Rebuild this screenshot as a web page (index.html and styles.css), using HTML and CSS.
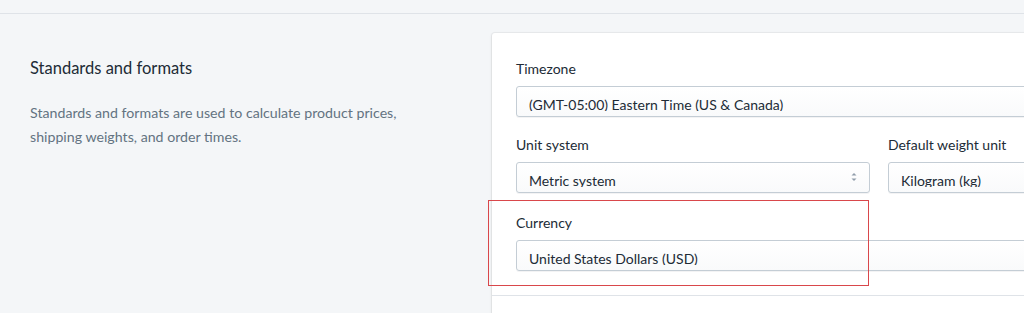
FILE: index.html
```html
<!DOCTYPE html>
<html lang="en">
<head>
    <meta charset="UTF-8">
    <meta name="viewport" content="width=device-width, initial-scale=1.0">
    <title>General settings</title>
    <link rel="stylesheet" href="styles.css">
</head>
<body>
    <div class="topbar"></div>

    <div class="layout">
        <div class="annotation">
            <h2 class="annotation-title">Standards and formats</h2>
            <p class="annotation-text">Standards and formats are used to calculate product prices, shipping weights, and order times.</p>
        </div>

        <div class="card">
            <div class="card-section">
                <div class="field">
                    <label class="field-label">Timezone</label>
                    <div class="select">
                        <span class="select-value">(GMT-05:00) Eastern Time (US &amp; Canada)</span>
                    </div>
                </div>

                <div class="field-row">
                    <div class="field field-unit">
                        <label class="field-label">Unit system</label>
                        <div class="select">
                            <span class="select-value">Metric system</span>
                            <svg class="select-arrows" width="8" height="10" viewBox="0 0 8 10">
                                <path d="M4 1 L6.5 3.5 H1.5 Z" fill="#919eab"/>
                                <path d="M4 9 L6.5 6.5 H1.5 Z" fill="#919eab"/>
                            </svg>
                        </div>
                    </div>
                    <div class="field field-weight">
                        <label class="field-label">Default weight unit</label>
                        <div class="select">
                            <span class="select-value">Kilogram (kg)</span>
                        </div>
                    </div>
                </div>

                <div class="field field-currency">
                    <label class="field-label">Currency</label>
                    <div class="select">
                        <span class="select-value">United States Dollars (USD)</span>
                    </div>
                </div>
            </div>
            <div class="card-section card-section-empty"></div>

            <!-- highlight drawn over the currency field -->
            <div class="highlight"></div>
        </div>
    </div>
</body>
</html>
```

FILE: styles.css
```css
* {
    margin: 0;
    padding: 0;
    box-sizing: border-box;
}

body, html {
    height: 100%;
    background-color: #f4f6f8;
    font-family: Lato, "Open Sans", sans-serif;
    color: #212b36;
    overflow: hidden;
}

.topbar {
    height: 14px;
    border-bottom: 1px solid #dfe3e8;
}

.layout {
    display: flex;
    padding-top: 19px;
}

/* Left column */
.annotation {
    width: 492px;
    flex-shrink: 0;
    padding: 23px 0 0 30px;
}

.annotation-title {
    font-size: 16.5px;
    font-weight: 400;
    line-height: 24px;
    color: #212b36;
    margin-bottom: 21px;
}

.annotation-text {
    width: 390px;
    font-size: 14.2px;
    line-height: 24px;
    color: #637381;
}

/* Card */
.card {
    position: relative;
    width: 560px;
    flex-shrink: 0;
    background: #fff;
    border-radius: 3px;
    box-shadow: 0 0 0 1px rgba(63, 63, 68, 0.05), 0 1px 3px 0 rgba(63, 63, 68, 0.15);
}

.card-section {
    display: flex;
    flex-direction: column;
    gap: 18px;
    padding: 26px 24px 24px 24px;
}

.card-section-empty {
    height: 40px;
    border-top: 1px solid #dfe3e8;
}

.field-row {
    display: flex;
    gap: 18px;
}

.field-unit {
    width: 354px;
    flex-shrink: 0;
}

.field-weight {
    flex: 1;
}

.field-currency {
    margin-top: 2px;
}

.field-label {
    display: block;
    font-size: 14px;
    line-height: 20px;
    color: #212b36;
    margin-bottom: 7px;
}

.select {
    position: relative;
    height: 31px;
    padding: 0 12px;
    border: 1px solid #c4cdd5;
    border-radius: 3px;
    background: linear-gradient(180deg, #fff, #f9fafb);
    box-shadow: 0 1px 0 0 rgba(22, 29, 37, 0.05);
}

/* text sits low and the descenders are cut, as in the native control */
.select-value {
    display: block;
    margin-top: 8px;
    height: 16px;
    overflow: hidden;
    font-size: 14px;
    line-height: 20px;
    color: #212b36;
    white-space: nowrap;
}

.select-arrows {
    position: absolute;
    right: 11px;
    top: 9px;
}

.highlight {
    position: absolute;
    left: -4px;
    top: 167px;
    width: 381px;
    height: 86px;
    border: 1px solid #d9474b;
    pointer-events: none;
}
```
